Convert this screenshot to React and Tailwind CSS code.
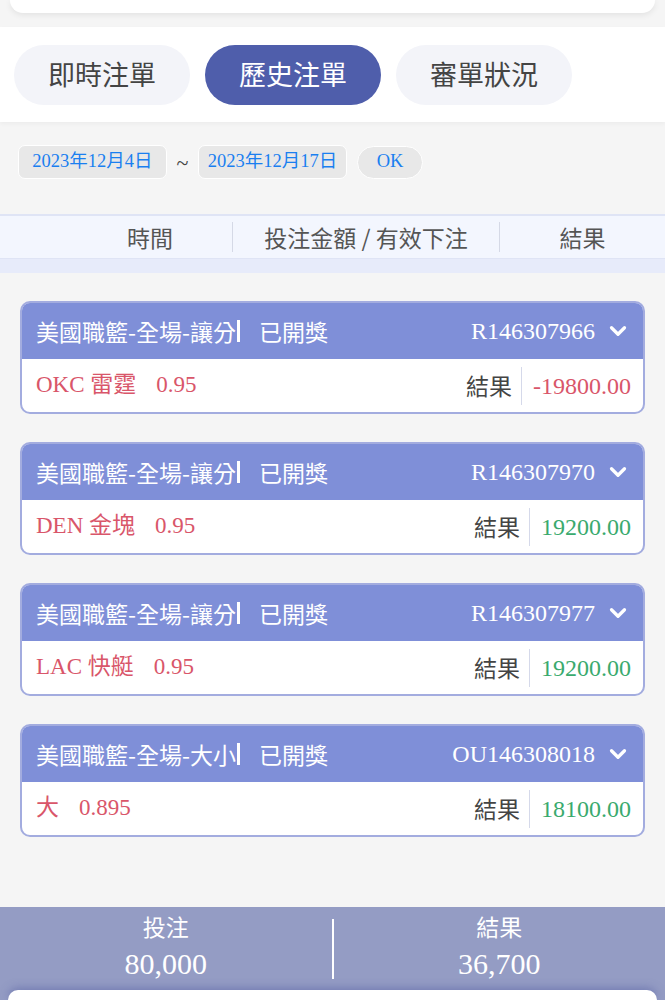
import { ChevronDown } from "lucide-react";

const SANS = "font-['Noto_Sans_CJK_TC','Noto_Sans',sans-serif]";
const SERIF = "font-['Liberation_Serif','Noto_Sans_CJK_TC',serif]";

const BETS = [
  { title: "美國職籃-全場-讓分", id: "R146307966", team: "OKC 雷霆", odds: "0.95", result: "-19800.00", win: false },
  { title: "美國職籃-全場-讓分", id: "R146307970", team: "DEN 金塊", odds: "0.95", result: "19200.00", win: true },
  { title: "美國職籃-全場-讓分", id: "R146307977", team: "LAC 快艇", odds: "0.95", result: "19200.00", win: true },
  { title: "美國職籃-全場-大小", id: "OU146308018", team: "大", odds: "0.895", result: "18100.00", win: true },
];

function BetCard({ bet }) {
  return (
    <div className="mx-[20px] rounded-[10px] border-2 border-[#a3acdf] overflow-hidden bg-white">
      <div className="h-[56px] bg-[#7f8fd8] flex items-center justify-between pl-[14px] pr-[12px] text-white">
        <div className={`${SANS} text-[23px] flex items-center`}>
          <span>{bet.title}</span>
          <span className="ml-[1px] w-[3px] h-[22px] bg-white" />
          <span className="ml-[19px]">已開獎</span>
        </div>
        <div className="flex items-center gap-[10px]">
          <span className={`${SERIF} text-[24px]`}>{bet.id}</span>
          <ChevronDown size={26} strokeWidth={3} />
        </div>
      </div>
      <div className="h-[53px] flex items-center justify-between pl-[14px] pr-[12px]">
        <div className={`${SERIF} text-[23px] text-[#d9566a] flex items-center gap-[20px]`}>
          <span>{bet.team}</span>
          <span>{bet.odds}</span>
        </div>
        <div className="flex items-center">
          <span className={`${SANS} text-[23px] text-[#444] pr-[9px]`}>結果</span>
          <span className="w-px h-[38px] bg-[#d5d9ea]" />
          <span
            className={`${SERIF} text-[24px] pl-[11px] ${bet.win ? "text-[#3aaa6e]" : "text-[#d9566a]"}`}
          >
            {bet.result}
          </span>
        </div>
      </div>
    </div>
  );
}

export default function App() {
  return (
    <div className="h-[1000px] overflow-hidden bg-[#f5f5f5] flex flex-col">
      {/* top card */}
      <div className="mx-[10px] h-[13px] bg-white rounded-b-[18px] shadow-[0_2px_6px_rgba(0,0,0,0.08)]" />

      {/* tabs */}
      <div className="mt-[14px] h-[95px] bg-white flex items-center gap-[15px] px-[14px] shadow-[0_2px_4px_rgba(0,0,0,0.04)]">
        <div className={`${SANS} w-[176px] h-[60px] rounded-full bg-[#f3f4f9] text-[#444] text-[27px] flex items-center justify-center`}>
          即時注單
        </div>
        <div className={`${SANS} w-[176px] h-[60px] rounded-full bg-[#4f5eab] text-white text-[27px] flex items-center justify-center`}>
          歷史注單
        </div>
        <div className={`${SANS} w-[176px] h-[60px] rounded-full bg-[#f3f4f9] text-[#444] text-[27px] flex items-center justify-center`}>
          審單狀況
        </div>
      </div>

      {/* date row */}
      <div className={`${SERIF} mt-[23px] flex items-center pl-[18px] text-[18.5px] text-[#1a7ff0]`}>
        <div className="w-[149px] h-[34px] rounded-[7px] bg-[#e8e8e8] border border-white flex items-center justify-center">
          2023年12月4日
        </div>
        <span className="w-[31px] text-center text-[#444] text-[22px]">~</span>
        <div className="w-[149px] h-[34px] rounded-[7px] bg-[#e8e8e8] border border-white flex items-center justify-center">
          2023年12月17日
        </div>
        <div className="ml-[10px] w-[66px] h-[33px] rounded-full bg-[#e8e8e8] border border-white flex items-center justify-center">
          OK
        </div>
      </div>

      {/* table header */}
      <div className="mt-[35px] border-t-2 border-[#dfe4f5] bg-[#f3f6fe] h-[44px] flex items-center text-[23px] text-[#555]">
        <div className={`${SANS} w-[232px] pl-[68px] text-center`}>時間</div>
        <span className="w-px h-[30px] bg-[#d5d9e6]" />
        <div className={`${SANS} w-[266px] text-center`}>投注金額 / 有效下注</div>
        <span className="w-px h-[30px] bg-[#d5d9e6]" />
        <div className={`${SANS} flex-1 text-center`}>結果</div>
      </div>
      <div className="h-[15px] bg-[#e7ebfa] border-t border-[#dfe4f5]" />

      {/* bet list */}
      <div className="mt-[28px] flex flex-col gap-[28px]">
        {BETS.map((bet) => (
          <BetCard key={bet.id} bet={bet} />
        ))}
      </div>

      <div className="flex-1" />

      {/* totals */}
      <div className="h-[83px] bg-[#949cc4] flex items-center text-white">
        <div className="flex-1 flex flex-col items-center">
          <span className={`${SANS} text-[23px] leading-[30px]`}>投注</span>
          <span className={`${SERIF} text-[30px] leading-[46px]`}>80,000</span>
        </div>
        <span className="w-[2px] h-[60px] bg-white" />
        <div className="flex-1 flex flex-col items-center">
          <span className={`${SANS} text-[23px] leading-[30px]`}>結果</span>
          <span className={`${SERIF} text-[30px] leading-[46px]`}>36,700</span>
        </div>
      </div>
      <div className="h-[10px] bg-[#949cc4]">
        <div className="mx-[8px] h-[10px] bg-white rounded-t-[16px] shadow-[0_-2px_8px_rgba(80,90,160,0.5)]" />
      </div>
    </div>
  );
}
